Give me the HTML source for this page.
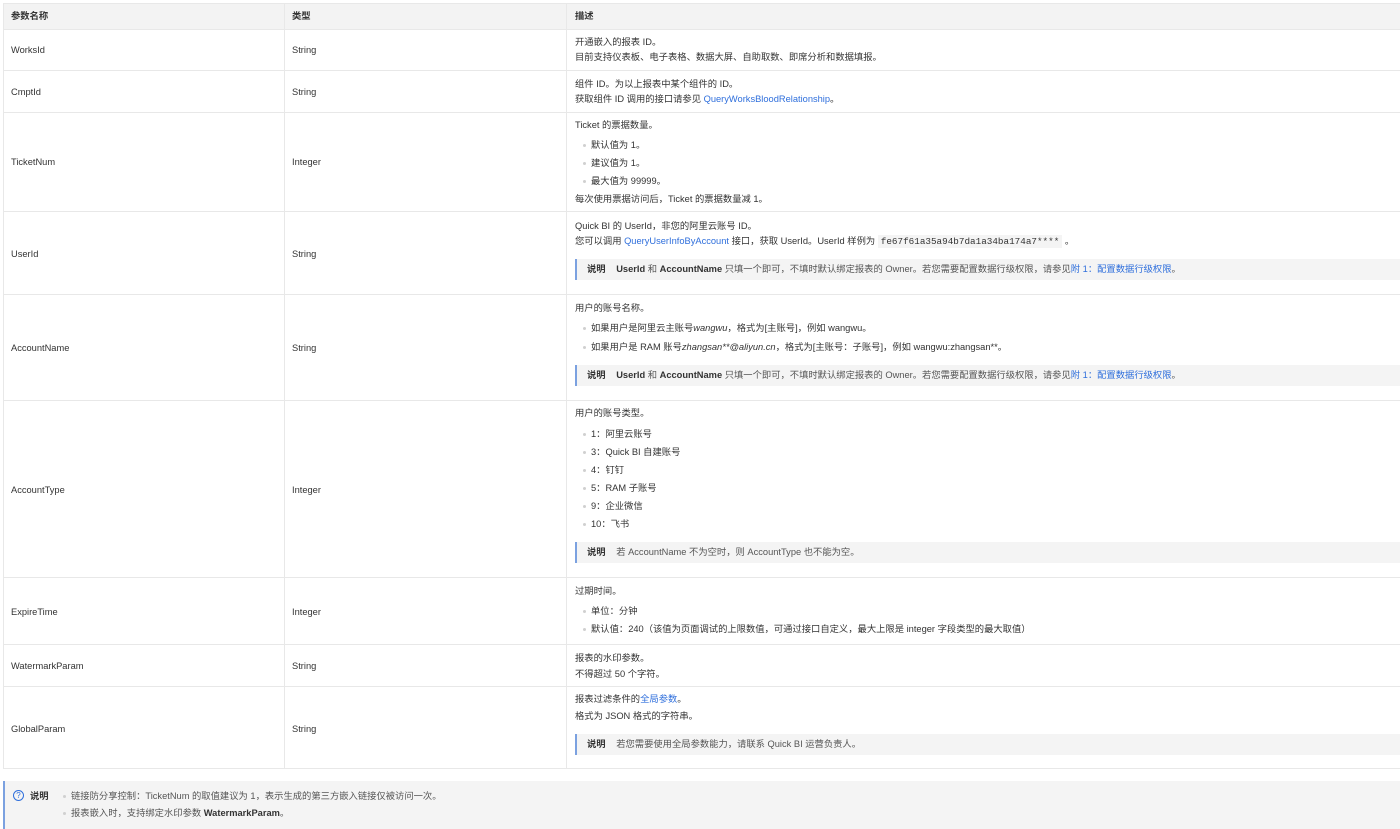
<!DOCTYPE html>
<html><head><meta charset="utf-8"><style>
*{margin:0;padding:0;box-sizing:border-box}
body{width:1400px;height:829px;background:#fff;position:relative;overflow:hidden;font-family:"Liberation Sans","Noto Sans CJK SC",sans-serif;font-size:9.3px;color:#333}
.r{position:absolute;left:3px;width:1397px;border-bottom:1px solid #e8e8e8}
.v{position:absolute;top:3px;height:766px;width:1px;background:#e8e8e8}
.t{position:absolute;white-space:nowrap;line-height:12px;transform:translateY(-6px)}
.b::before{content:"";position:absolute;left:-8px;top:5px;width:3px;height:3px;border-radius:50%;background:#d0d0d0}
.n{position:absolute;left:575px;width:825px;height:21px;background:#f4f4f4;border-left:2px solid #7ba1e0;line-height:20px;padding-left:10px;white-space:nowrap;color:#555}
.n b{color:#333;margin-right:8px}
.n strong{color:#333}
a{color:#2f6fdc;text-decoration:none}
code{font-family:"Liberation Mono",monospace;background:#f4f4f4;padding:1px 3px;color:#333}
</style></head><body>
<div class="r" style="top:3px;height:27px;background:#f3f3f3;border-top:1px solid #e8e8e8"></div>
<div class="r" style="top:29px;height:42px"></div>
<div class="r" style="top:71px;height:42px"></div>
<div class="r" style="top:113px;height:99px"></div>
<div class="r" style="top:212px;height:83px"></div>
<div class="r" style="top:295px;height:106px"></div>
<div class="r" style="top:401px;height:177px"></div>
<div class="r" style="top:578px;height:67px"></div>
<div class="r" style="top:645px;height:42px"></div>
<div class="r" style="top:687px;height:82px"></div>
<div class="v" style="left:3px"></div><div class="v" style="left:284px"></div><div class="v" style="left:566px"></div>

<div class="t" style="left:11px;top:16px;font-weight:bold">参数名称</div>
<div class="t" style="left:292px;top:16px;font-weight:bold">类型</div>
<div class="t" style="left:575px;top:16px;font-weight:bold">描述</div>

<div class="t" style="left:11px;top:50px">WorksId</div><div class="t" style="left:292px;top:50px">String</div>
<div class="t" style="left:575px;top:42px">开通嵌入的报表 ID。</div>
<div class="t" style="left:575px;top:57px">目前支持仪表板、电子表格、数据大屏、自助取数、即席分析和数据填报。</div>

<div class="t" style="left:11px;top:92px">CmptId</div><div class="t" style="left:292px;top:92px">String</div>
<div class="t" style="left:575px;top:84px">组件 ID。为以上报表中某个组件的 ID。</div>
<div class="t" style="left:575px;top:99px">获取组件 ID 调用的接口请参见 <a>QueryWorksBloodRelationship</a>。</div>

<div class="t" style="left:11px;top:162px">TicketNum</div><div class="t" style="left:292px;top:162px">Integer</div>
<div class="t" style="left:575px;top:125px">Ticket 的票据数量。</div>
<div class="t b" style="left:591px;top:145px">默认值为 1。</div>
<div class="t b" style="left:591px;top:163px">建议值为 1。</div>
<div class="t b" style="left:591px;top:181px">最大值为 99999。</div>
<div class="t" style="left:575px;top:199px">每次使用票据访问后，Ticket 的票据数量减 1。</div>

<div class="t" style="left:11px;top:254px">UserId</div><div class="t" style="left:292px;top:254px">String</div>
<div class="t" style="left:575px;top:226px">Quick BI 的 UserId，非您的阿里云账号 ID。</div>
<div class="t" style="left:575px;top:241px">您可以调用 <a>QueryUserInfoByAccount</a> 接口，获取 UserId。UserId 样例为 <code>fe67f61a35a94b7da1a34ba174a7****</code> 。</div>
<div class="n" style="top:259px"><b>说明</b> <strong>UserId</strong> 和 <strong>AccountName</strong> 只填一个即可，不填时默认绑定报表的 Owner。若您需要配置数据行级权限，请参见<a>附 1：配置数据行级权限</a>。</div>

<div class="t" style="left:11px;top:348px">AccountName</div><div class="t" style="left:292px;top:348px">String</div>
<div class="t" style="left:575px;top:308px">用户的账号名称。</div>
<div class="t b" style="left:591px;top:328px">如果用户是阿里云主账号<i>wangwu</i>，格式为[主账号]，例如 wangwu。</div>
<div class="t b" style="left:591px;top:347px">如果用户是 RAM 账号<i>zhangsan**@aliyun.cn</i>，格式为[主账号：子账号]，例如 wangwu:zhangsan**。</div>
<div class="n" style="top:365px"><b>说明</b> <strong>UserId</strong> 和 <strong>AccountName</strong> 只填一个即可，不填时默认绑定报表的 Owner。若您需要配置数据行级权限，请参见<a>附 1：配置数据行级权限</a>。</div>

<div class="t" style="left:11px;top:490px">AccountType</div><div class="t" style="left:292px;top:490px">Integer</div>
<div class="t" style="left:575px;top:413px">用户的账号类型。</div>
<div class="t b" style="left:591px;top:434px">1：阿里云账号</div>
<div class="t b" style="left:591px;top:452px">3：Quick BI 自建账号</div>
<div class="t b" style="left:591px;top:470px">4：钉钉</div>
<div class="t b" style="left:591px;top:488px">5：RAM 子账号</div>
<div class="t b" style="left:591px;top:506px">9：企业微信</div>
<div class="t b" style="left:591px;top:524px">10：飞书</div>
<div class="n" style="top:542px"><b>说明</b> 若 AccountName 不为空时，则 AccountType 也不能为空。</div>

<div class="t" style="left:11px;top:612px">ExpireTime</div><div class="t" style="left:292px;top:612px">Integer</div>
<div class="t" style="left:575px;top:591px">过期时间。</div>
<div class="t b" style="left:591px;top:611px">单位：分钟</div>
<div class="t b" style="left:591px;top:629px">默认值：240（该值为页面调试的上限数值，可通过接口自定义，最大上限是 integer 字段类型的最大取值）</div>

<div class="t" style="left:11px;top:666px">WatermarkParam</div><div class="t" style="left:292px;top:666px">String</div>
<div class="t" style="left:575px;top:658px">报表的水印参数。</div>
<div class="t" style="left:575px;top:674px">不得超过 50 个字符。</div>

<div class="t" style="left:11px;top:729px">GlobalParam</div><div class="t" style="left:292px;top:729px">String</div>
<div class="t" style="left:575px;top:699px">报表过滤条件的<a>全局参数</a>。</div>
<div class="t" style="left:575px;top:716px">格式为 JSON 格式的字符串。</div>
<div class="n" style="top:734px"><b>说明</b> 若您需要使用全局参数能力，请联系 Quick BI 运营负责人。</div>

<div style="position:absolute;left:3px;top:781px;width:1397px;height:48px;background:#f4f4f4;border-left:2px solid #7ba1e0"></div>
<div style="position:absolute;left:13px;top:790px;width:11px;height:11px;border:1px solid #2f6fdc;border-radius:50%;color:#2f6fdc;font-size:8px;line-height:9px;text-align:center">?</div>
<div class="t" style="left:30px;top:796px;font-weight:bold">说明</div>
<div class="t b" style="left:71px;top:796px;color:#555">链接防分享控制：TicketNum 的取值建议为 1，表示生成的第三方嵌入链接仅被访问一次。</div>
<div class="t b" style="left:71px;top:813px;color:#555">报表嵌入时，支持绑定水印参数 <b style="color:#333">WatermarkParam</b>。</div>
</body></html>
